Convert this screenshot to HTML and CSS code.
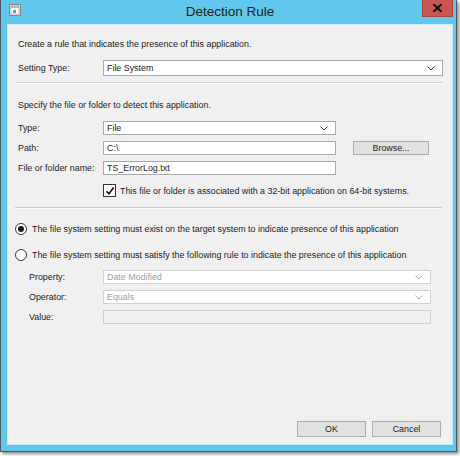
FILE: index.html
```html
<!DOCTYPE html>
<html>
<head>
<meta charset="utf-8">
<link rel="stylesheet" href="styles.css">
</head>
<body>
<div class="window">
  <div class="titlebar">
    <span class="app-icon">
      <svg width="12" height="12" viewBox="0 0 12 12">
        <rect x="0.5" y="0.5" width="11" height="11" fill="#dcdcdc" stroke="#8a8a8a"/>
        <rect x="2" y="2" width="8" height="8" fill="#fbfbfb" stroke="#a8a8a8" stroke-width="0.6"/>
        <rect x="2" y="2" width="8" height="2" fill="#b9b9b9"/>
        <rect x="4" y="6" width="3" height="3" fill="#3aa6e0"/>
      </svg>
    </span>
    <span class="title">Detection Rule</span>
    <span class="close">
      <svg width="9" height="8" viewBox="0 0 9 8">
        <path d="M1 0.8 L8 7.2 M8 0.8 L1 7.2" stroke="#111" stroke-width="2" stroke-linecap="square"/>
      </svg>
    </span>
  </div>
  <div class="content">
    <p class="text intro">Create a rule that indicates the presence of this application.</p>
    <div class="setting-row">
      <span class="label">Setting Type:</span>
      <div class="select tall">
        <span>File System</span>
        <svg class="chev" width="8" height="5" viewBox="0 0 8 5"><path d="M0.5 0.5 L4 4 L7.5 0.5" fill="none" stroke="#333" stroke-width="1"/></svg>
      </div>
    </div>
    <div class="sep"></div>
    <p class="text specify">Specify the file or folder to detect this application.</p>
    <div class="file-grid">
      <span class="label">Type:</span>
      <div class="select">
        <span>File</span>
        <svg class="chev" width="8" height="5" viewBox="0 0 8 5"><path d="M0.5 0.5 L4 4 L7.5 0.5" fill="none" stroke="#333" stroke-width="1"/></svg>
      </div>
      <span></span>
      <span class="label">Path:</span>
      <div class="input">C:\</div>
      <div class="button browse">Browse...</div>
      <span class="label">File or folder name:</span>
      <div class="input">TS_ErrorLog.txt</div>
      <span></span>
    </div>
    <div class="check-row">
      <span class="checkbox">
        <svg width="10" height="10" viewBox="0 0 10 10"><path d="M1.5 5.2 L4 7.8 L8.6 1.6" fill="none" stroke="#111" stroke-width="1.6"/></svg>
      </span>
      <span class="text">This file or folder is associated with a 32-bit application on 64-bit systems.</span>
    </div>
    <div class="sep sep2"></div>
    <div class="radio-row first">
      <span class="radio checked"><span class="dot"></span></span>
      <span class="text">The file system setting must exist on the target system to indicate presence of this application</span>
    </div>
    <div class="radio-row">
      <span class="radio"></span>
      <span class="text">The file system setting must satisfy the following rule to indicate the presence of this application</span>
    </div>
    <div class="prop-grid">
      <span class="label">Property:</span>
      <div class="select disabled">
        <span>Date Modified</span>
        <svg class="chev" width="8" height="5" viewBox="0 0 8 5"><path d="M0.5 0.5 L4 4 L7.5 0.5" fill="none" stroke="#b4b4b4" stroke-width="1"/></svg>
      </div>
      <span class="label">Operator:</span>
      <div class="select disabled">
        <span>Equals</span>
        <svg class="chev" width="8" height="5" viewBox="0 0 8 5"><path d="M0.5 0.5 L4 4 L7.5 0.5" fill="none" stroke="#b4b4b4" stroke-width="1"/></svg>
      </div>
      <span class="label">Value:</span>
      <div class="input disabled-input"></div>
    </div>
    <div class="spacer"></div>
    <div class="buttons">
      <div class="button">OK</div>
      <div class="button">Cancel</div>
    </div>
  </div>
</div>
</body>
</html>
```

FILE: styles.css
```css
* { box-sizing: border-box; }
html, body { margin: 0; padding: 0; background: #ffffff; }
body {
  font-family: "Liberation Sans", Arial, sans-serif;
  font-size: 8.9px;
  color: #1c1c1c;
  width: 460px;
  height: 456px;
  overflow: hidden;
}
.window {
  width: 457px;
  height: 452px;
  background: #62c7ec;
  border-left: 1px solid #4a5a60;
  border-right: 1px solid #4a5a60;
  border-bottom: 1px solid #4a5a60;
  box-shadow: 2px 2px 3px rgba(0,0,0,0.45);
  padding: 0 3px 6px 6px;
  display: flex;
  flex-direction: column;
}
.titlebar {
  height: 24px;
  flex: none;
  display: grid;
  grid-template-columns: 1fr auto 1fr;
  align-items: start;
  margin-left: -6px;
  margin-right: -3px;
}
.app-icon { display: block; margin: 4px 0 0 8px; width: 12px; height: 12px; }
.app-icon svg { display: block; }
.title {
  font-size: 13.5px;
  line-height: 16px;
  margin-top: 4px;
  color: #1d1d1d;
  padding-left: 3px;
}
.close {
  justify-self: end;
  margin-right: 3px;
  width: 31px;
  height: 17px;
  background: #c9574f;
  border: 1px solid #a5413a;
  border-top: none;
  display: flex;
  align-items: center;
  justify-content: center;
}
.close svg { display: block; }
.content {
  flex: 1;
  background: #f0f0f0;
  border: 1px solid #cdebf7;
  padding: 0 11px 7px 10px;
  display: flex;
  flex-direction: column;
}
.text { margin: 0; line-height: 12px; white-space: nowrap; }
.label { line-height: 12px; white-space: nowrap; }
.intro { margin-top: 13px; }
.setting-row {
  margin-top: 10px;
  display: grid;
  grid-template-columns: 85px 340px;
  align-items: center;
}
.select, .input {
  background: #ffffff;
  border: 1px solid #a9a9a9;
  height: 14px;
  display: flex;
  align-items: center;
  padding: 0 7px 0 3px;
  line-height: 12px;
  white-space: nowrap;
}
.select { justify-content: space-between; }
.select.tall { height: 16px; }
.chev { display: block; flex: none; }
.select.disabled { border-color: #d2d2d2; color: #a0a0a0; }
.input.disabled-input { background: #f0f0f0; border-color: #cfcfcf; }
.sep {
  height: 2px;
  border-top: 1px solid #cdcdcd;
  border-bottom: 1px solid #fbfbfb;
  margin: 6px -1px 0 -3px;
}
.specify { margin-top: 15px; }
.file-grid {
  margin-top: 10px;
  display: grid;
  grid-template-columns: 85px 233px 93px;
  row-gap: 6px;
  align-items: center;
}
.button {
  background: #e1e1e1;
  border: 1px solid #adadad;
  height: 14px;
  display: flex;
  align-items: center;
  justify-content: center;
  line-height: 12px;
}
.browse { margin-left: 17px; }
.check-row {
  margin-top: 9px;
  padding-left: 85px;
  display: flex;
  align-items: center;
  gap: 4px;
}
.checkbox {
  width: 13px;
  height: 13px;
  background: #ffffff;
  border: 1px solid #333333;
  display: flex;
  align-items: center;
  justify-content: center;
}
.checkbox svg { display: block; }
.sep2 { margin-top: 10px; }
.radio-row {
  margin-top: 14px;
  margin-left: -3px;
  display: flex;
  align-items: center;
  gap: 5px;
}
.radio-row.first { margin-top: 14px; }
.radio {
  width: 12px;
  height: 12px;
  border-radius: 50%;
  border: 1px solid #3a3a3a;
  background: #ffffff;
  display: flex;
  align-items: center;
  justify-content: center;
  flex: none;
}
.radio .dot { width: 6px; height: 6px; border-radius: 50%; background: #1a1a1a; }
.prop-grid {
  margin-top: 9px;
  padding-left: 11px;
  display: grid;
  grid-template-columns: 74px 328px;
  row-gap: 6px;
  align-items: center;
}
.spacer { flex: 1; }
.buttons {
  display: flex;
  justify-content: flex-end;
  gap: 6px;
}
.buttons .button { width: 69px; height: 16px; }
```
